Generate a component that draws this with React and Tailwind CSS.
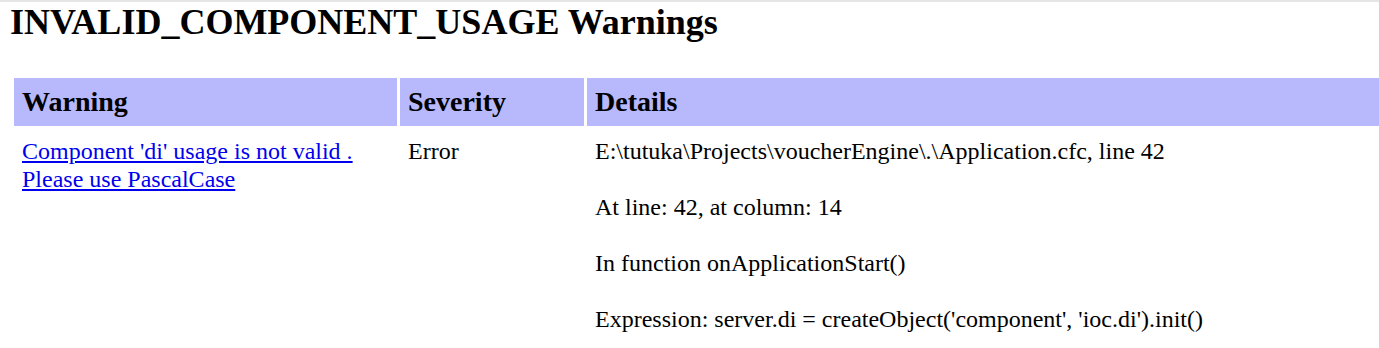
export default function App() {
  const serif = { fontFamily: '"Liberation Serif", "Times New Roman", serif' };
  return (
    <div className="w-[1379px] h-[348px] bg-white overflow-hidden border-t-2 border-[#e6e6e6] text-black" style={serif}>
      <h1 className="m-0 ml-[10px] text-[36px] font-bold leading-[41px]">INVALID_COMPONENT_USAGE Warnings</h1>
      <div className="mt-[35px] ml-[14px] w-[1365px] grid grid-cols-[383px_184px_1fr] gap-[3px]">
        <div className="bg-[#b8b8fc] px-2 py-2 text-[28px] font-bold leading-[32px]">Warning</div>
        <div className="bg-[#b8b8fc] px-2 py-2 text-[28px] font-bold leading-[32px]">Severity</div>
        <div className="bg-[#b8b8fc] px-2 py-2 text-[28px] font-bold leading-[32px]">Details</div>
        <div className="px-2 py-2 text-[24px] leading-[28px]">
          <a href="#" className="text-[#0000ee] underline">Component 'di' usage is not valid . Please use PascalCase</a>
        </div>
        <div className="px-2 py-2 text-[24px] leading-[28px]">Error</div>
        <div className="px-2 py-2 text-[24px] leading-[28px]">
          E:\tutuka\Projects\voucherEngine\.\Application.cfc, line 42
          <br />
          <br />
          At line: 42, at column: 14
          <br />
          <br />
          In function onApplicationStart()
          <br />
          <br />
          Expression: server.di = createObject('component', 'ioc.di').init()
        </div>
      </div>
    </div>
  );
}
